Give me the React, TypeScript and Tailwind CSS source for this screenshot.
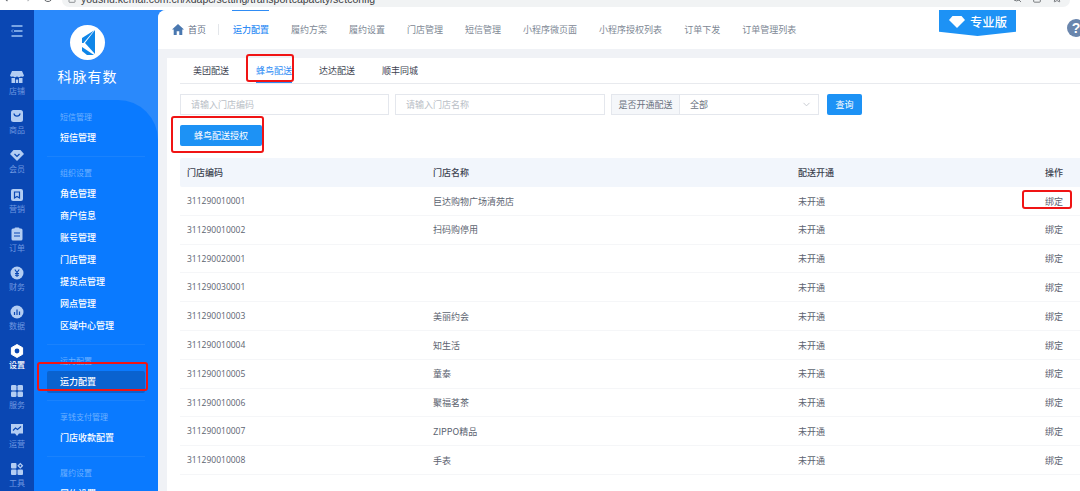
import { ChevronDown, ChevronLeft, ChevronRight, Lock, RotateCw, Search, Share, Star } from "lucide-react";
import type { ReactNode } from "react";

const font = "font-['Noto_Sans_CJK_SC','Noto_Sans',sans-serif]";

const railItems: { label: string; active?: boolean; icon: ReactNode }[] = [
  {
    label: "店铺",
    icon: (
      <svg viewBox="0 0 14 14" className="h-[14px] w-[14px]" fill="currentColor">
        <path d="M2 1h10l2 4.500a2 2 0 0 1-3 .8 2.400 2.400 0 0 1-4 0 2.400 2.400 0 0 1-4 0 2 2 0 0 1-3-.8z" />
        <path d="M1.500 8h3.500v5H1.500zM9 8h3.500v5H9zM5.800 9.500h2.400V13H5.800z" />
      </svg>
    ),
  },
  {
    label: "商品",
    icon: (
      <svg viewBox="0 0 14 14" className="h-[14px] w-[14px]">
        <rect x="1" y="1" width="12" height="12" rx="2.500" fill="currentColor" />
        <path d="M4 4.500c.5 3.500 5.500 3.500 6 0" fill="none" stroke="#0a47b3" strokeWidth="1.300" />
      </svg>
    ),
  },
  {
    label: "会员",
    icon: (
      <svg viewBox="0 0 14 14" className="h-[14px] w-[14px]">
        <path d="M3.500 2h7L14 6l-7 7-7-7z" fill="currentColor" />
        <path d="M4.500 6 7 8.500 9.500 6" fill="none" stroke="#0a47b3" strokeWidth="1.200" />
      </svg>
    ),
  },
  {
    label: "营销",
    icon: (
      <svg viewBox="0 0 14 14" className="h-[14px] w-[14px]">
        <rect x="1" y="1" width="12" height="12" rx="2" fill="currentColor" />
        <path d="M4.500 4h5v6L7 8.500 4.500 10z" fill="none" stroke="#0a47b3" strokeWidth="1.200" />
      </svg>
    ),
  },
  {
    label: "订单",
    icon: (
      <svg viewBox="0 0 14 14" className="h-[14px] w-[14px]">
        <rect x="1.500" y="1.500" width="11" height="12" rx="1.500" fill="currentColor" />
        <rect x="4.500" y="0.500" width="5" height="2.500" rx="1" fill="currentColor" />
        <path d="M4 6h6M4 9h6" stroke="#0a47b3" strokeWidth="1.200" />
      </svg>
    ),
  },
  {
    label: "财务",
    icon: (
      <svg viewBox="0 0 14 14" className="h-[14px] w-[14px]">
        <circle cx="7" cy="7" r="6.500" fill="currentColor" />
        <path d="M4.800 3.500 7 6.500l2.200-3M7 6.500V11M5 7.500h4M5 9.200h4" fill="none" stroke="#0a47b3" strokeWidth="1.100" />
      </svg>
    ),
  },
  {
    label: "数据",
    icon: (
      <svg viewBox="0 0 14 14" className="h-[14px] w-[14px]">
        <circle cx="7" cy="7" r="6.500" fill="currentColor" />
        <path d="M4.500 7v3M7 4.500V10M9.500 6.500V10" stroke="#0a47b3" strokeWidth="1.200" />
      </svg>
    ),
  },
  {
    label: "设置",
    active: true,
    icon: (
      <svg viewBox="0 0 14 14" className="h-[14px] w-[14px]">
        <path d="M7 .500 12.600 3.700v6.600L7 13.500 1.400 10.300V3.700z" fill="currentColor" stroke="currentColor" strokeWidth="1" strokeLinejoin="round" />
        <circle cx="7" cy="7" r="2.400" fill="#0a47b3" />
      </svg>
    ),
  },
  {
    label: "服务",
    icon: (
      <svg viewBox="0 0 14 14" className="h-[14px] w-[14px]" fill="currentColor">
        <rect x="1" y="1" width="5.500" height="5.500" rx="1.300" />
        <rect x="7.500" y="1" width="5.500" height="5.500" rx="1.300" />
        <rect x="1" y="7.500" width="5.500" height="5.500" rx="1.300" />
        <rect x="7.500" y="7.500" width="5.500" height="5.500" rx="1.300" />
      </svg>
    ),
  },
  {
    label: "运营",
    icon: (
      <svg viewBox="0 0 14 14" className="h-[14px] w-[14px]">
        <path d="M1 1h12v9.500H9L7 13l-2-2.500H1z" fill="currentColor" />
        <path d="m3 7.500 2.500-2.500 2 1.500L11 3.500" fill="none" stroke="#0a47b3" strokeWidth="1.100" />
      </svg>
    ),
  },
  {
    label: "工具",
    icon: (
      <svg viewBox="0 0 14 14" className="h-[14px] w-[14px]" fill="currentColor">
        <rect x="1" y="1" width="5.500" height="5.500" rx="1" />
        <path d="m10.300.800 3 3-3 3-3-3zm0 1.800-1.200 1.200 1.200 1.200 1.200-1.200z" fillRule="evenodd" />
        <rect x="1" y="7.500" width="5.500" height="5.500" rx="1" />
        <rect x="7.500" y="7.500" width="5.500" height="5.500" rx="1" />
      </svg>
    ),
  },
];

const menuGroups = [
  { title: "短信管理", items: ["短信管理"] },
  { title: "组织设置", items: ["角色管理", "商户信息", "账号管理", "门店管理", "提货点管理", "网点管理", "区域中心管理"] },
  { title: "运力配置", items: ["运力配置"] },
  { title: "享钱支付管理", items: ["门店收款配置"] },
  { title: "履约设置", items: ["履约设置"] },
];

const navItems = ["运力配置", "履约方案", "履约设置", "门店管理", "短信管理", "小程序微页面", "小程序授权列表", "订单下发", "订单管理列表"];
const tabs = ["美团配送", "蜂鸟配送", "达达配送", "顺丰同城"];

const rows = [
  ["311290010001", "巨达购物广场清苑店"],
  ["311290010002", "扫码购停用"],
  ["311290020001", ""],
  ["311290030001", ""],
  ["311290010003", "美丽约会"],
  ["311290010004", "知生活"],
  ["311290010005", "童泰"],
  ["311290010006", "聚福茗茶"],
  ["311290010007", "ZIPPO精品"],
  ["311290010008", "手表"],
];

// only the bottom few pixels of the browser toolbar are in the shot
function BrowserBar() {
  return (
    <div className="flex h-[10px] shrink-0 items-start overflow-hidden bg-white text-[#5f6368]">
      <ChevronLeft size={13} className="ml-[-1px] mt-[-9px] shrink-0" />
      <ChevronRight size={13} className="ml-[11px] mt-[-9px] shrink-0 text-[#b5b7ba]" />
      <RotateCw size={12} className="ml-[6px] mt-[-9px] shrink-0" />
      <div className="ml-[8px] flex h-[7px] flex-1 items-start rounded-b-[9px] bg-[#f1f3f4] pl-[6px]">
        <Lock size={8} className="mt-[-5px] shrink-0" />
        <span className="ml-[5px] mt-[-8px] whitespace-nowrap font-['Liberation_Sans',sans-serif] text-[10.500px] leading-[14px] text-[#3c4043]">youshu.kemai.com.cn/xdapc/setting/transportcapacity/setconfig</span>
        <div className="ml-auto mr-[8px] mt-[-7px] flex items-center gap-[10px]">
          <Search size={10} />
          <Share size={10} />
          <Star size={10} />
        </div>
      </div>
      <div className="w-[10px]" />
    </div>
  );
}

function Rail() {
  return (
    <div className="flex w-[34px] shrink-0 flex-col items-center overflow-hidden bg-[#0a47b3]">
      <svg viewBox="0 0 12 12" className="mt-[15px] h-[12px] w-[12px] shrink-0 text-[#9dc3f5]" fill="none" stroke="currentColor" strokeWidth="1.300">
        <path d="M0.500 1h11M3 6h8.500M0.500 11h11" />
        <path d="M2 4.500.500 6 2 7.500" strokeWidth="0.800" />
      </svg>
      <div className="mt-[33px] flex shrink-0 flex-col items-center">
        {railItems.map((item) => (
          <div key={item.label} className={`flex h-[39.200px] shrink-0 flex-col items-center ${item.active ? "text-white" : "text-[#6f97e0]"}`}>
            <span className={item.active ? "text-white" : "text-[#b3cdf3]"}>{item.icon}</span>
            <span className={`text-[8px] leading-[13px] ${item.active ? "font-medium" : ""}`}>{item.label}</span>
          </div>
        ))}
      </div>
    </div>
  );
}

function Sidebar() {
  return (
    <div className="flex w-[124px] shrink-0 flex-col bg-[#2a89fb]">
      <div className="flex h-[90px] shrink-0 flex-col items-center pr-[17px]">
        <div className="mt-[15px] h-[35px] w-[35px] shrink-0 rounded-full bg-white">
          <svg viewBox="0 0 26 32" className="ml-[6px] mt-[3px] h-[32px] w-[26px]">
            <path d="M19 2v24L9 15z" fill="#0f86e8" />
            <path d="M18 2.500 6 10v5h1.500z" fill="#0f86e8" />
            <path d="m6 19 12 8h-7l-5-4z" fill="#0f86e8" />
          </svg>
        </div>
        <div className="mt-[6px] text-[14px] leading-[20px] tracking-[1px] text-white">科脉有数</div>
      </div>
      <div className="flex-1 overflow-hidden rounded-tr-[40px] bg-[#0a7aff]">
        <div className="px-[13px] pt-[5.500px]">
          {menuGroups.map((group, i) => (
            <div key={group.title} className={i ? "mt-[7px] border-t border-[#2a89fb]/50 pt-[5px]" : ""}>
              <div className="ml-[13px] h-[21px] text-[8px] leading-[21px] text-[#6db0ff]">{group.title}</div>
              {group.items.map((item) => {
                const active = item === "运力配置";
                return (
                  <div key={item} className={`pl-[13px] text-[9px] font-medium leading-[22px] text-white ${active ? "rounded-[2px] bg-[#0a62cf]" : ""}`}>
                    {item}
                  </div>
                );
              })}
            </div>
          ))}
        </div>
      </div>
    </div>
  );
}

function TopNav() {
  return (
    <div className="relative flex h-[39px] shrink-0 items-center rounded-tl-[8px] bg-white pl-[14px]">
      <svg viewBox="0 0 14 14" className="h-[13px] w-[12px] text-[#4a78b0]" fill="currentColor">
        <path d="M7 .500 14 7h-2v6.500H8.500V9h-3v4.500H2V7H0z" />
      </svg>
      <span className="ml-[4px] text-[9px] text-[#667085]">首页</span>
      <span className="ml-[12px] h-[11px] w-px bg-[#e3e6ea]" />
      <div className="ml-[14px] flex gap-[22px]">
        {navItems.map((item, i) => (
          <span key={item} className={`text-[9px] ${i === 0 ? "font-medium text-[#2f8cf5]" : "text-[#7d8794]"}`}>{item}</span>
        ))}
      </div>
      <span className="absolute left-[74px] top-0 h-[1px] w-[37px] bg-[#2f8cf5]" />
      <div className="absolute left-[781px] top-0 flex h-[26px] w-[77px] items-start justify-center gap-[4px] bg-[#1d92f5] pt-[4px] [clip-path:polygon(0_0,100%_0,100%_84%,50%_100%,0_84%)]">
        <svg viewBox="0 0 16 12" className="mt-[2px] h-[12px] w-[18px]" fill="white">
          <path d="M3.500 0h9L16 4 8 12 0 4z" />
        </svg>
        <span className="text-[12.300px] font-medium leading-[16px] text-white">专业版</span>
      </div>
      <div className="absolute left-[909px] top-[9px] flex h-[18px] w-[18px] items-center justify-center rounded-full bg-[#6a86ad] font-['Liberation_Sans',sans-serif] text-[14px] font-bold text-white">?</div>
    </div>
  );
}

function Filters() {
  return (
    <div className="flex items-center pl-[13px] text-[9px]">
      <div className="flex h-[21px] w-[209px] items-center border border-[#e4e7ed] pl-[10px] text-[#b9bec6]">请输入门店编码</div>
      <div className="ml-[6px] flex h-[21px] w-[210px] items-center border border-[#e4e7ed] pl-[10px] text-[#b9bec6]">请输入门店名称</div>
      <div className="ml-[6px] flex h-[21px] w-[208px] items-center border border-[#e4e7ed]">
        <span className="flex h-full w-[67px] items-center justify-center bg-[#f5f7fa] text-[#6b7280]">是否开通配送</span>
        <span className="flex h-full flex-1 items-center border-l border-[#e4e7ed] pl-[10px] text-[#6b7280]">全部</span>
        <ChevronDown size={11} className="mr-[6px] text-[#c4c8cf]" />
      </div>
      <button type="button" className="ml-[8px] h-[21px] w-[35px] rounded-[2px] bg-[#1d92f5] text-white">查询</button>
    </div>
  );
}

function StoreTable() {
  return (
    <div className="ml-[13px] mt-[12px] text-[9px]">
      <div className="flex h-[29px] items-center rounded-l-[2px] bg-[#f2f6fc] font-medium text-[#3c4250]">
        <span className="w-[246px] pl-[7px]">门店编码</span>
        <span className="w-[365px] pl-[7px]">门店名称</span>
        <span className="flex-1 pl-[7px]">配送开通</span>
        <span className="pr-[17px]">操作</span>
      </div>
      {rows.map(([code, name]) => (
        <div key={code} className="flex h-[28.800px] items-center border-b border-[#f5f6f8] pt-[1px] text-[#5c6370]">
          <span className="w-[246px] pl-[7px] font-['Open_Sans',sans-serif] text-[8.500px]">{code}</span>
          <span className="w-[365px] pl-[7px]">{name}</span>
          <span className="flex-1 pl-[7px]">未开通</span>
          <span className="pr-[17px]">绑定</span>
        </div>
      ))}
    </div>
  );
}

export default function App() {
  return (
    <div className={`relative flex h-[491px] w-[1080px] flex-col overflow-hidden bg-white ${font}`}>
      <BrowserBar />
      <div className="flex min-h-0 flex-1">
        <Rail />
        <Sidebar />
        <div className="flex min-w-0 flex-1 flex-col bg-[#2a89fb]">
          <div className="flex min-h-0 flex-1 flex-col rounded-tl-[8px] bg-[#f0f2f6]">
            <TopNav />
            <div className="ml-[9px] mt-[9px] flex-1 overflow-hidden bg-white">
              <div className="ml-[13px] flex h-[26px] items-center gap-[27px] border-b border-[#e8eaee] pl-[13px] text-[9px] text-[#3c4250]">
                {tabs.map((tab, i) => (
                  <span key={tab} className={`relative leading-[25px] ${i === 1 ? "text-[#2f8cf5]" : ""}`}>
                    {tab}
                    {i === 1 && <span className="absolute bottom-0 left-0 h-[1px] w-full bg-[#2f8cf5]" />}
                  </span>
                ))}
              </div>
              <div className="mt-[10px]">
                <Filters />
              </div>
              <button type="button" className="ml-[13px] mt-[10px] block h-[21px] w-[82px] rounded-[2px] bg-[#1d92f5] text-[9px] text-white">蜂鸟配送授权</button>
              <StoreTable />
            </div>
          </div>
        </div>
      </div>
      {/* red annotation boxes drawn over the screenshot */}
      <div className="absolute left-[37px] top-[362px] h-[29px] w-[111px] rounded-[3px] border-2 border-[#f01414]" />
      <div className="absolute left-[246px] top-[54px] h-[28px] w-[48px] rounded-[3px] border-2 border-[#f01414]" />
      <div className="absolute left-[171px] top-[116px] h-[37px] w-[93px] rounded-[3px] border-2 border-[#f01414]" />
      <div className="absolute left-[1022px] top-[190px] h-[19px] w-[50px] rounded-[3px] border-2 border-[#f01414]" />
    </div>
  );
}
